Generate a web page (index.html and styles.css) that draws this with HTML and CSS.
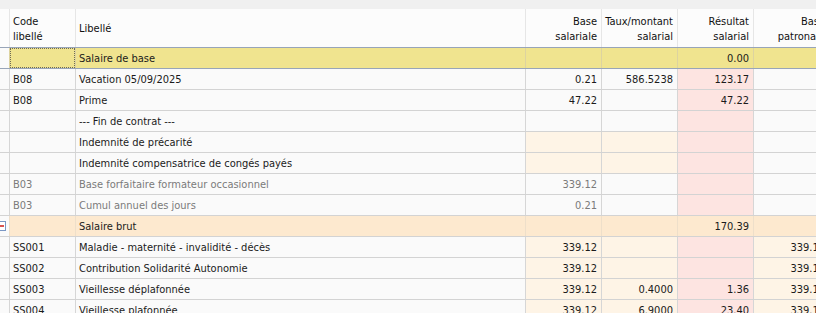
FILE: index.html
```html
<!DOCTYPE html>
<html lang="fr">
<head>
<meta charset="utf-8">
<title>Bulletin</title>
<link rel="stylesheet" href="styles.css">
</head>
<body>
<div class="strip"></div>
<div class="grid">
  <div class="row head">
    <div class="c c0"></div>
    <div class="c code">Code<br>libellé</div>
    <div class="c lib">Libellé</div>
    <div class="c num">Base<br>salariale</div>
    <div class="c num">Taux/montant<br>salarial</div>
    <div class="c num">Résultat<br>salarial</div>
    <div class="c num">Base<br>patronale</div>
  </div>

  <div class="row yellow">
    <div class="c c0"></div>
    <div class="c code"><span class="focus"></span></div>
    <div class="c lib">Salaire de base</div>
    <div class="c num"></div>
    <div class="c num"></div>
    <div class="c num">0.00</div>
    <div class="c num"></div>
  </div>

  <div class="row">
    <div class="c c0"></div>
    <div class="c code">B08</div>
    <div class="c lib">Vacation 05/09/2025</div>
    <div class="c num">0.21</div>
    <div class="c num">586.5238</div>
    <div class="c num pink">123.17</div>
    <div class="c num"></div>
  </div>

  <div class="row">
    <div class="c c0"></div>
    <div class="c code">B08</div>
    <div class="c lib">Prime</div>
    <div class="c num">47.22</div>
    <div class="c num"></div>
    <div class="c num pink">47.22</div>
    <div class="c num"></div>
  </div>

  <div class="row">
    <div class="c c0"></div>
    <div class="c code"></div>
    <div class="c lib">--- Fin de contrat ---</div>
    <div class="c num"></div>
    <div class="c num"></div>
    <div class="c num pink"></div>
    <div class="c num"></div>
  </div>

  <div class="row">
    <div class="c c0"></div>
    <div class="c code"></div>
    <div class="c lib">Indemnité de précarité</div>
    <div class="c num cream"></div>
    <div class="c num cream"></div>
    <div class="c num pink"></div>
    <div class="c num"></div>
  </div>

  <div class="row">
    <div class="c c0"></div>
    <div class="c code"></div>
    <div class="c lib">Indemnité compensatrice de congés payés</div>
    <div class="c num cream"></div>
    <div class="c num cream"></div>
    <div class="c num pink"></div>
    <div class="c num"></div>
  </div>

  <div class="row muted">
    <div class="c c0"></div>
    <div class="c code">B03</div>
    <div class="c lib">Base forfaitaire formateur occasionnel</div>
    <div class="c num">339.12</div>
    <div class="c num"></div>
    <div class="c num pink"></div>
    <div class="c num"></div>
  </div>

  <div class="row muted">
    <div class="c c0"></div>
    <div class="c code">B03</div>
    <div class="c lib">Cumul annuel des jours</div>
    <div class="c num">0.21</div>
    <div class="c num"></div>
    <div class="c num pink"></div>
    <div class="c num"></div>
  </div>

  <div class="row peach">
    <div class="c c0"><svg class="toggle" width="10" height="10" viewBox="0 0 10 10"><rect x="0.5" y="0.5" width="8" height="9" fill="#ffffff" stroke="#7a97c4"/><rect x="1" y="4" width="6" height="2" fill="#d9534f"/></svg></div>
    <div class="c code"></div>
    <div class="c lib">Salaire brut</div>
    <div class="c num"></div>
    <div class="c num"></div>
    <div class="c num">170.39</div>
    <div class="c num"></div>
  </div>

  <div class="row">
    <div class="c c0"></div>
    <div class="c code">SS001</div>
    <div class="c lib">Maladie - maternité - invalidité - décès</div>
    <div class="c num cream">339.12</div>
    <div class="c num cream"></div>
    <div class="c num pink"></div>
    <div class="c num cream">339.12</div>
  </div>

  <div class="row">
    <div class="c c0"></div>
    <div class="c code">SS002</div>
    <div class="c lib">Contribution Solidarité Autonomie</div>
    <div class="c num cream">339.12</div>
    <div class="c num cream"></div>
    <div class="c num pink"></div>
    <div class="c num cream">339.12</div>
  </div>

  <div class="row">
    <div class="c c0"></div>
    <div class="c code">SS003</div>
    <div class="c lib">Vieillesse déplafonnée</div>
    <div class="c num cream">339.12</div>
    <div class="c num cream">0.4000</div>
    <div class="c num pink">1.36</div>
    <div class="c num cream">339.12</div>
  </div>

  <div class="row">
    <div class="c c0"></div>
    <div class="c code">SS004</div>
    <div class="c lib">Vieillesse plafonnée</div>
    <div class="c num cream">339.12</div>
    <div class="c num cream">6.9000</div>
    <div class="c num pink">23.40</div>
    <div class="c num cream">339.12</div>
  </div>
</div>
</body>
</html>
```

FILE: styles.css
```css
html, body {
  margin: 0;
  padding: 0;
  background: #ffffff;
  overflow: hidden;
  width: 816px;
  height: 313px;
}

body {
  font-family: "DejaVu Sans Condensed", "DejaVu Sans", Tahoma, sans-serif;
  font-size: 11px;
  color: #1b1b1b;
}

.strip {
  height: 9px;
  background: #f0f0f0;
}

.grid {
  width: 900px;
}

.row {
  display: grid;
  grid-template-columns: 10px 66px 450px 76px 76px 76px 76px;
  height: 21px;
  border-bottom: 1px solid #d3d3d3;
  box-sizing: border-box;
  background: #fafafa;
}

.c {
  box-sizing: border-box;
  border-right: 1px solid #d6d6d6;
  display: flex;
  align-items: center;
  line-height: 18px;
  padding-top: 2px;
  white-space: nowrap;
  overflow: hidden;
}

.code, .lib {
  padding-left: 3px;
}

.num {
  justify-content: flex-end;
  text-align: right;
  padding-right: 4px;
}

.c0 {
  background: #fafafa;
  padding-top: 0;
}

.head {
  height: 39px;
  background: #fcfcfc;
  border-bottom: 1px solid #98a5b8;
}

.head .c {
  line-height: 15px;
  padding-top: 1px;
  color: #111111;
  border-right-color: #e6e6e6;
}

.head .c0 {
  background: #fcfcfc;
}

.yellow {
  background: #f0e48f;
  border-bottom-color: #98a5b8;
}

.yellow .c {
  border-right-color: #ddd3a0;
}

.yellow .code {
  padding: 0;
}

.focus {
  display: block;
  width: 100%;
  height: 20px;
  box-sizing: border-box;
  border: 1px dotted #6e6a55;
}

.peach {
  background: #fde9cf;
}

.peach .c {
  border-right-color: #eedfca;
}

.muted {
  color: #7b7b7b;
}

.pink {
  background: #fde4e1;
}

.cream {
  background: #fef4e6;
}

.toggle {
  display: block;
  margin-left: -3px;
  margin-top: -1px;
  flex: none;
}
```
